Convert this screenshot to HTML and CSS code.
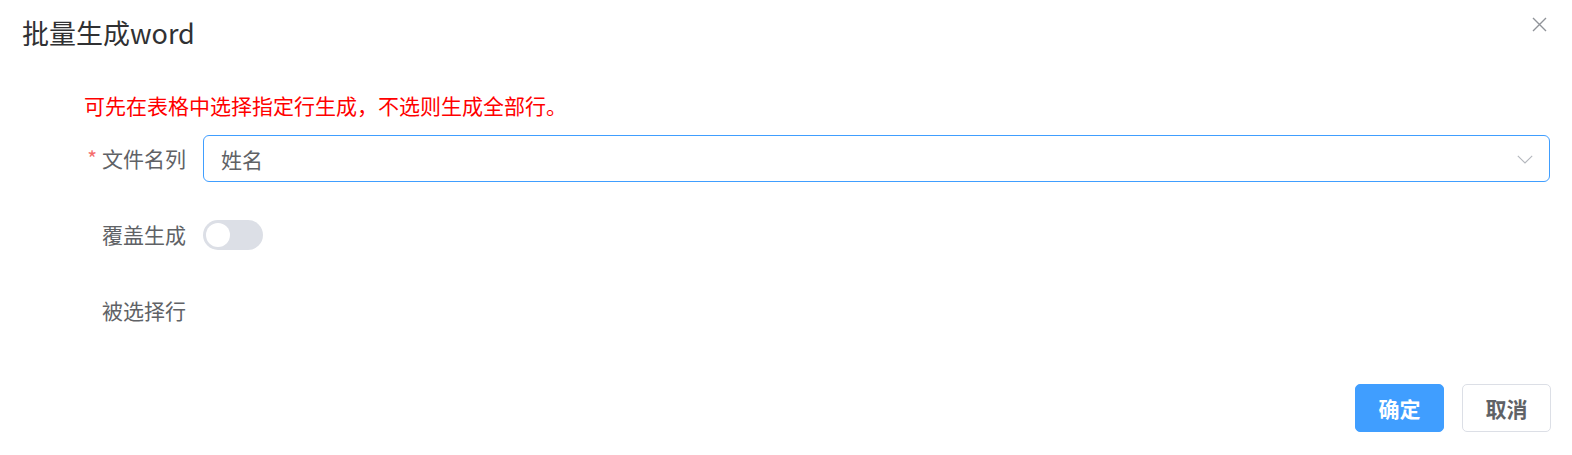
FILE: index.html
```html
<!DOCTYPE html>
<html lang="zh-CN">
<head>
<meta charset="utf-8">
<title>批量生成word</title>
<link rel="stylesheet" href="styles.css">
</head>
<body>
<div class="dialog">
  <div class="dialog-header">
    <span class="dialog-title">批量生成word</span>
    <button class="dialog-close" aria-label="Close">
      <svg width="15" height="15" viewBox="0 0 15 15"><path d="M1 1 L14 14 M14 1 L1 14" stroke="#909399" stroke-width="1.4" fill="none"/></svg>
    </button>
  </div>
  <div class="dialog-body">
    <div class="tip">可先在表格中选择指定行生成，不选则生成全部行。</div>
    <div class="form-item">
      <label class="form-label"><span class="required">*</span>文件名列</label>
      <div class="form-content">
        <div class="select">
          <span class="select-value">姓名</span>
          <svg class="select-arrow" width="16" height="9" viewBox="0 0 16 9"><path d="M0.8 0.8 L8 8 L15.2 0.8" stroke="#b4b7bd" stroke-width="1.1" fill="none"/></svg>
        </div>
      </div>
    </div>
    <div class="form-item">
      <label class="form-label">覆盖生成</label>
      <div class="form-content">
        <span class="switch"><span class="switch-knob"></span></span>
      </div>
    </div>
    <div class="form-item">
      <label class="form-label">被选择行</label>
      <div class="form-content"></div>
    </div>
  </div>
  <div class="dialog-footer">
    <button class="btn btn-primary">确定</button>
    <button class="btn btn-default">取消</button>
  </div>
</div>
</body>
</html>
```
FILE: styles.css
```css
* { box-sizing: border-box; }
html, body {
  margin: 0;
  padding: 0;
  background: #ffffff;
}
body {
  font-family: "Noto Sans CJK SC", "Noto Sans", sans-serif;
  color: #606266;
}
.dialog {
  position: relative;
  width: 1572px;
  height: 455px;
  background: #fff;
}
.dialog-header {
  padding: 16px 23px 0 22px;
  height: 95px;
}
.dialog-title {
  font-size: 27px;
  line-height: 34px;
  color: #303133;
  display: block;
}
.dialog-close {
  position: absolute;
  top: 17px;
  right: 25px;
  width: 15px;
  height: 15px;
  padding: 0;
  border: none;
  background: transparent;
  display: flex;
}
.dialog-body {
  padding: 0 22px 0 84px;
}
.tip {
  color: #ff0000;
  font-size: 21px;
  line-height: 21px;
  height: 21px;
  margin-bottom: 19px;
}
.form-item {
  display: flex;
  align-items: center;
  height: 47px;
  margin-bottom: 29px;
}
.form-label {
  width: 119px;
  padding-right: 17px;
  text-align: right;
  font-size: 21px;
  line-height: 47px;
  color: #606266;
  flex: none;
  white-space: nowrap;
}
.required {
  color: #f56c6c;
  margin-right: 5px;
}
.form-content {
  flex: 1;
  display: flex;
  align-items: center;
  height: 47px;
}
.select {
  flex: 1;
  height: 47px;
  border: 1.5px solid #409eff;
  border-radius: 6px;
  display: flex;
  align-items: center;
  padding: 0 16px 0 17px;
}
.select-value {
  flex: 1;
  font-size: 21px;
  color: #606266;
}
.select-arrow {
  margin-top: 1px;
}
.switch {
  width: 60px;
  height: 30px;
  border-radius: 15px;
  background: #dcdfe6;
  display: flex;
  align-items: center;
  padding: 0 3px;
}
.switch-knob {
  width: 24px;
  height: 24px;
  border-radius: 50%;
  background: #fff;
}
.dialog-footer {
  position: absolute;
  left: 0;
  right: 21px;
  top: 384px;
  display: flex;
  justify-content: flex-end;
  gap: 18px;
}
.btn {
  width: 89px;
  height: 48px;
  border-radius: 5px;
  font-family: "Noto Sans CJK SC", sans-serif;
  font-size: 21px;
  font-weight: 700;
  padding: 0;
  cursor: pointer;
}
.btn-primary {
  background: #409eff;
  border: 1px solid #409eff;
  color: #fff;
}
.btn-default {
  background: #fff;
  border: 1px solid #dcdfe6;
  color: #606266;
}
```
